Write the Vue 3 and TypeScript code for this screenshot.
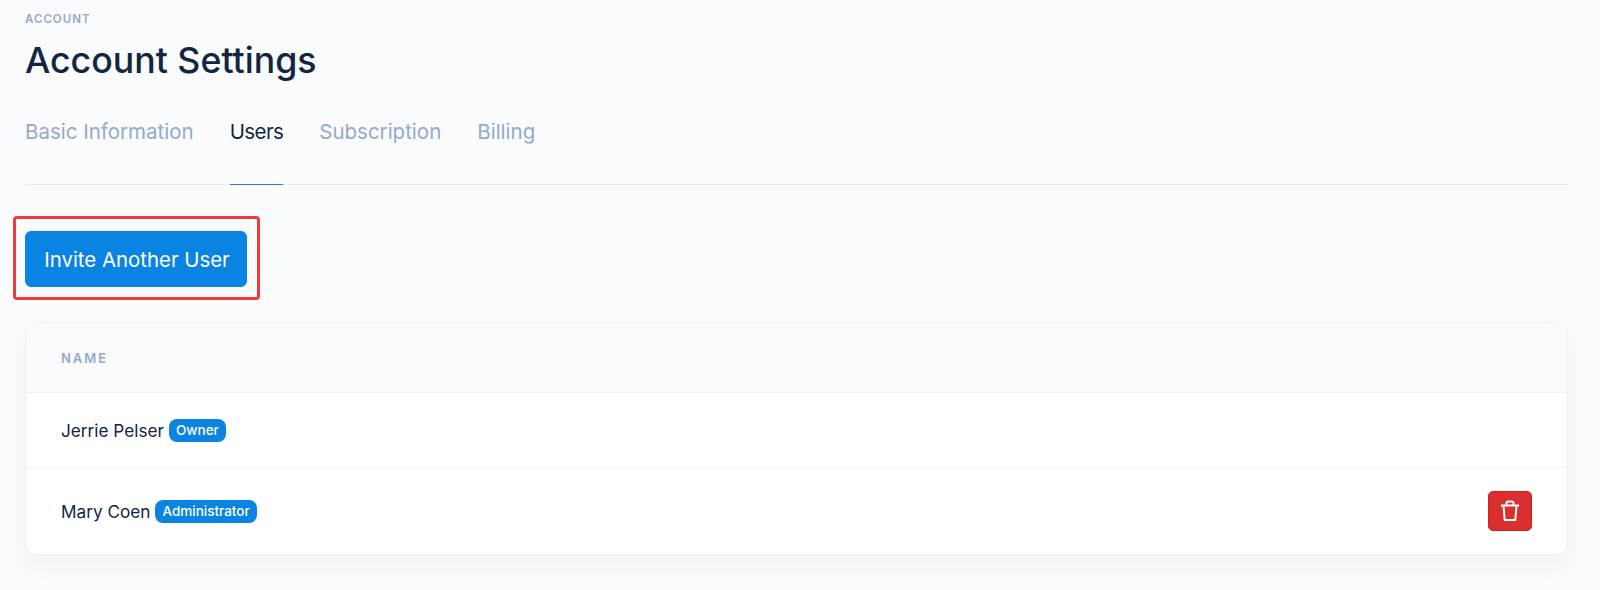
<script setup lang="ts">
const tabs = [
  { label: 'Basic Information', active: false },
  { label: 'Users', active: true },
  { label: 'Subscription', active: false },
  { label: 'Billing', active: false },
]

const users = [
  { name: 'Jerrie Pelser', role: 'Owner', removable: false },
  { name: 'Mary Coen', role: 'Administrator', removable: true },
]
</script>

<template>
  <div class="page">
    <div class="eyebrow">ACCOUNT</div>
    <h1 class="title">Account Settings</h1>

    <nav class="tabs">
      <a v-for="tab in tabs" :key="tab.label" class="tab" :class="{ active: tab.active }">{{ tab.label }}</a>
    </nav>

    <div class="actions">
      <button class="invite" type="button">Invite Another User</button>
      <div class="highlight"></div>
    </div>

    <div class="card">
      <div class="card-head">NAME</div>
      <div v-for="user in users" :key="user.name" class="row">
        <span class="name">{{ user.name }}</span>
        <span class="badge">{{ user.role }}</span>
        <button v-if="user.removable" class="remove" type="button" aria-label="Remove user">
          <svg width="20" height="22" viewBox="0 0 20 22" fill="none" stroke="#fff" stroke-width="2">
            <path d="M1 5.5h18" />
            <path d="M3.5 5.5l1.2 14.5h10.6l1.2-14.5" />
            <path d="M6.5 5.5V3.2c0-1 .7-1.7 1.7-1.7h3.6c1 0 1.7.7 1.7 1.7v2.3" />
          </svg>
        </button>
      </div>
    </div>
  </div>
</template>

<style>
html,
body {
  background: #f9fbfd;
}
</style>

<style scoped>
.page {
  height: 590px;
  box-sizing: border-box;
  padding: 12px 32px 0 25px;
  overflow: hidden;
  font-family: Inter, "Liberation Sans", sans-serif;
  color: #12263f;
}
.eyebrow {
  font-size: 11.5px;
  line-height: 15px;
  font-weight: 600;
  letter-spacing: 1px;
  color: #95aac9;
}
.title {
  margin: 12px 0 0;
  font-size: 35.7px;
  line-height: 42px;
  font-weight: 500;
  color: #12263f;
}
.tabs {
  display: flex;
  gap: 36px;
  margin-top: 21px;
  border-bottom: 1px solid #e3ebf6;
}
.tab {
  padding: 17px 0 39px;
  margin-bottom: -1px;
  font-size: 20.5px;
  line-height: 26px;
  color: #95aac9;
  border-bottom: 1px solid transparent;
}
.tab.active {
  color: #12263f;
  letter-spacing: -0.6px;
  border-bottom-color: #2c7be5;
}
.actions {
  position: relative;
  margin-top: 46px;
}
.invite {
  display: block;
  width: 222px;
  height: 56px;
  padding: 0 0 0 2px;
  border: 1px solid #0a84e3;
  border-radius: 6px;
  background: #0a84e3;
  color: #fff;
  font: 400 20.4px Inter, "Liberation Sans", sans-serif;
}
.highlight {
  position: absolute;
  left: -12px;
  top: -15px;
  width: 247px;
  height: 84px;
  box-sizing: border-box;
  border: 3px solid #ef3b40;
  border-radius: 4px;
}
.card {
  margin-top: 35px;
  border: 1px solid #edf2f9;
  border-radius: 12px;
  background: #fff;
  box-shadow: 0 12px 24px rgba(18, 38, 63, 0.03);
  overflow: hidden;
}
.card-head {
  height: 69px;
  padding: 0 35px;
  display: flex;
  align-items: center;
  font-size: 13px;
  font-weight: 600;
  letter-spacing: 2px;
  color: #95aac9;
  background: #f9fbfd;
  border-bottom: 1px solid #edf2f9;
}
.row {
  display: flex;
  align-items: center;
  height: 74px;
  padding: 0 35px;
  border-bottom: 1px solid #edf2f9;
}
.row:last-child {
  height: 86px;
  border-bottom: 0;
}
.name {
  margin-top: 1px;
  font-size: 17.2px;
  color: #12263f;
}
.badge {
  margin-top: 1px;
  margin-left: 5px;
  padding: 0 7px;
  height: 23px;
  line-height: 23px;
  border-radius: 8px;
  background: #0a84e3;
  color: #fff;
  font-size: 13.5px;
  font-weight: 500;
}
.remove {
  margin-left: auto;
  width: 44px;
  height: 40px;
  padding: 0;
  display: flex;
  align-items: center;
  justify-content: center;
  border: 1px solid #cc1f1f;
  border-radius: 5px;
  background: #d92f2f;
}
</style>
